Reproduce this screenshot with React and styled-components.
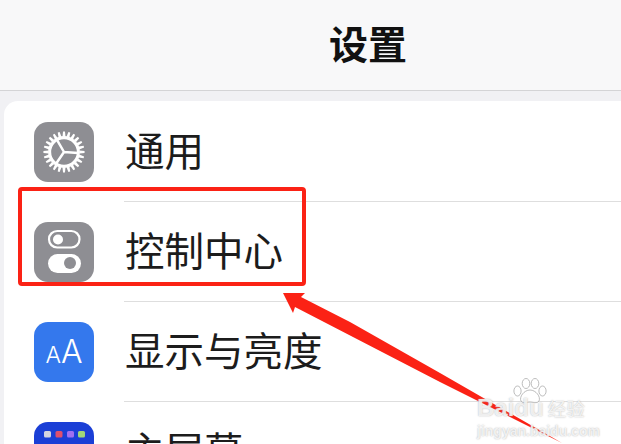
import React from 'react'
import styled, { createGlobalStyle } from 'styled-components'

const GlobalStyle = createGlobalStyle`
  html, body {
    margin: 0;
    padding: 0;
    background: #fff;
  }
  body {
    font-family: "Noto Sans CJK SC", "Liberation Sans", sans-serif;
  }
`

const Screen = styled.div`
  position: relative;
  width: 621px;
  height: 444px;
  overflow: hidden;
  background: #f1f1f4;
`
const Header = styled.div`
  height: 90px;
  display: flex;
  align-items: center;
  justify-content: center;
  background: #f8f8f9;
  border-bottom: 1px solid #d4d4d6;
`
const Title = styled.h1`
  margin: 0 0 6px 115px;
  font-size: 39px;
  font-weight: 700;
  line-height: 1;
  color: #111;
`
const List = styled.div`
  margin: 10px 0 0 4px;
  padding-top: 1px;
  background: #fff;
  border-radius: 14px 0 0 0;
`
const Row = styled.div`
  height: 100px;
  display: flex;
  align-items: center;
  padding-left: 30px;
  box-sizing: border-box;
`
const IconBox = styled.div`
  width: 60px;
  height: 60px;
  flex: none;
  border-radius: 14px;
  overflow: hidden;
  background: ${props => props.bg};
  display: flex;
  align-items: center;
  justify-content: center;
  color: #fff;
`
const RowBody = styled.div`
  flex: 1;
  align-self: stretch;
  margin-left: 30px;
  padding: 0 0 6px 1px;
  box-sizing: border-box;
  display: flex;
  align-items: center;
  border-bottom: 1px solid ${props => props.last ? 'transparent' : '#dedede'};
`
const Label = styled.span`
  font-size: 39.5px;
  font-weight: 400;
  line-height: 1;
  white-space: nowrap;
  color: #1c1c1c;
`
const AaText = styled.span`
  font-family: Inter, "Liberation Sans", sans-serif;
  font-size: 32px;
  font-weight: 300;
  line-height: 1;
`
const SmallA = styled.span`
  font-size: 23px;
`
const Highlight = styled.div`
  position: absolute;
  left: 18px;
  top: 187px;
  width: 288px;
  height: 99px;
  box-sizing: border-box;
  border: 4px solid #fb2215;
  border-radius: 4px;
`
const Overlay = styled.svg`
  position: absolute;
  left: 0;
  top: 0;
`
const Watermark = styled.div`
  position: absolute;
  left: 477px;
  top: 378px;
  color: rgba(255, 255, 255, 0.78);
  text-shadow: 0 0 1.5px rgba(165, 165, 165, 0.9);
`
const Paw = styled.svg`
  display: block;
  margin-left: 36px;
  margin-bottom: -8px;
`
const MarkTop = styled.div`
  display: flex;
  align-items: center;
  height: 24px;
  font-family: "Liberation Sans", sans-serif;
  font-size: 24px;
  font-weight: 700;
  white-space: nowrap;
`
const MarkCn = styled.span`
  margin-left: 4px;
  font-family: "Noto Sans CJK SC", sans-serif;
  font-size: 18.5px;
  font-weight: 400;
`
const MarkUrl = styled.div`
  margin-top: 3px;
  font-family: "Liberation Sans", sans-serif;
  font-size: 14px;
  font-weight: 700;
  line-height: 16px;
  white-space: nowrap;
`

const GearIcon = () => {
  const teeth = Array.from({ length: 24 }, (_, i) => i * 15)
  return (
    <svg width="44" height="44" viewBox="0 0 46 46">
      {teeth.map(a => (
        <path key={a} d="M22 1.5 L24 1.5 L24.6 7 L21.4 7 Z" fill="#fff" transform={`rotate(${a} 23 23)`} />
      ))}
      <circle cx="23" cy="23" r="15" fill="none" stroke="#fff" strokeWidth="3.2" />
      <path d="M23 23 L38 24 M23 23 L15.5 10 M23 23 L14.5 35.5" stroke="#fff" strokeWidth="2.6" />
    </svg>
  )
}

const SwitchIcon = () => (
  <svg width="60" height="60" viewBox="0 0 60 60">
    <rect x="15" y="9" width="30.5" height="16.5" rx="8.2" fill="none" stroke="#fff" strokeWidth="2.2" />
    <circle cx="24" cy="17.5" r="5" fill="#fff" />
    <rect x="14" y="32" width="33" height="19" rx="9.5" fill="#fff" />
    <circle cx="36" cy="41" r="6" fill="#8e8e93" />
  </svg>
)

const GridIcon = () => (
  <svg width="60" height="60" viewBox="0 0 60 60">
    <rect x="10" y="9" width="7" height="6.5" rx="1.5" fill="#d5d5e0" />
    <rect x="21.5" y="9" width="7" height="6.5" rx="1.5" fill="#e0506e" />
    <rect x="33" y="9" width="7" height="6.5" rx="1.5" fill="#a070f0" />
    <rect x="44" y="9" width="7" height="6.5" rx="1.5" fill="#a0d878" />
  </svg>
)

const PawMark = () => (
  <Paw width="34" height="26" viewBox="0 0 34 26">
    <g fill="rgba(255,255,255,0.78)" stroke="rgba(165,165,165,0.75)" strokeWidth="1">
      <ellipse cx="4.5" cy="13" rx="3.6" ry="5" />
      <ellipse cx="13" cy="5.5" rx="3.8" ry="5" />
      <ellipse cx="22" cy="5.5" rx="3.8" ry="5" />
      <ellipse cx="29.5" cy="13" rx="3.6" ry="5" />
      <path d="M17 12 C23 12 28 19 26 23 C24 26 20 24 17 24 C14 24 10 26 8 23 C6 19 11 12 17 12 Z" />
    </g>
  </Paw>
)

const App = () => {
  return (
    <>
      <GlobalStyle />
      <Screen>
        <Header>
          <Title>设置</Title>
        </Header>
        <List>
          <Row>
            <IconBox bg="#8e8e93"><GearIcon /></IconBox>
            <RowBody><Label>通用</Label></RowBody>
          </Row>
          <Row>
            <IconBox bg="#8e8e93"><SwitchIcon /></IconBox>
            <RowBody><Label>控制中心</Label></RowBody>
          </Row>
          <Row>
            <IconBox bg="#3478ed"><AaText><SmallA>A</SmallA>A</AaText></IconBox>
            <RowBody><Label>显示与亮度</Label></RowBody>
          </Row>
          <Row>
            <IconBox bg="#1b3fd6"><GridIcon /></IconBox>
            <RowBody last><Label>主屏幕</Label></RowBody>
          </Row>
        </List>
        <Highlight />
        <Overlay width="621" height="444" viewBox="0 0 621 444">
          <path d="M283 293 L305 293 L301 297 L350 322 L440 373 L562 443 L440 382 L295 307 L293 313 Z" fill="#fb2215" />
        </Overlay>
        <Watermark>
          <PawMark />
          <MarkTop>Baidu<MarkCn>经验</MarkCn></MarkTop>
          <MarkUrl>jingyan.baidu.com</MarkUrl>
        </Watermark>
      </Screen>
    </>
  )
}

export default App
